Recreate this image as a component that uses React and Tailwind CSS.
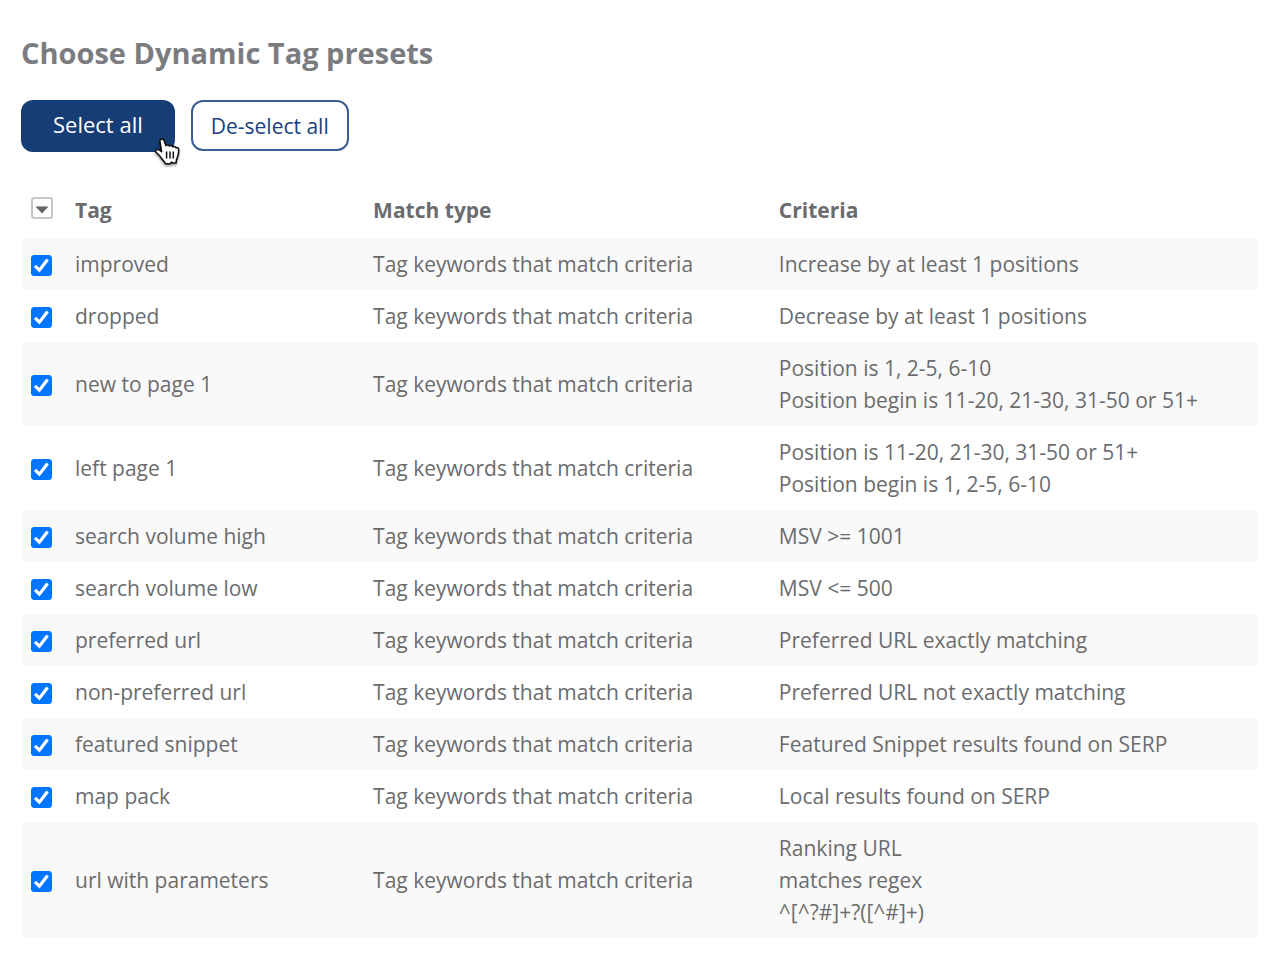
import { useState } from "react";

const MATCH_TYPE = "Tag keywords that match criteria";

const presets = [
    { tag: "improved", criteria: ["Increase by at least 1 positions"] },
    { tag: "dropped", criteria: ["Decrease by at least 1 positions"] },
    { tag: "new to page 1", criteria: ["Position is 1, 2-5, 6-10", "Position begin is 11-20, 21-30, 31-50 or 51+"] },
    { tag: "left page 1", criteria: ["Position is 11-20, 21-30, 31-50 or 51+", "Position begin is 1, 2-5, 6-10"] },
    { tag: "search volume high", criteria: ["MSV >= 1001"] },
    { tag: "search volume low", criteria: ["MSV <= 500"] },
    { tag: "preferred url", criteria: ["Preferred URL exactly matching"] },
    { tag: "non-preferred url", criteria: ["Preferred URL not exactly matching"] },
    { tag: "featured snippet", criteria: ["Featured Snippet results found on SERP"] },
    { tag: "map pack", criteria: ["Local results found on SERP"] },
    { tag: "url with parameters", criteria: ["Ranking URL", "matches regex", "^[^?#]+?([^#]+)"] },
];

const allTags = presets.map((preset) => preset.tag);

function Checkbox({ id, checked, onChange }) {
    return (
        <span className="relative block size-[21px]">
            <input
                id={id}
                type="checkbox"
                checked={checked}
                onChange={onChange}
                className="peer block size-[21px] appearance-none rounded-[3px] border border-[#b9b9b9] bg-white checked:border-[#0075ff] checked:bg-[#0075ff]"
            />
            <svg viewBox="0 0 21 21" className="pointer-events-none absolute inset-0 hidden peer-checked:block" aria-hidden="true">
                <path d="M4 10.8 L8.4 15.2 L16.6 4.6" fill="none" stroke="#fff" strokeWidth="3.2" />
            </svg>
        </span>
    );
}

function HandCursor() {
    return (
        <svg viewBox="0 0 26 30" className="pointer-events-none absolute -right-[5px] -bottom-[15px] h-[30px] w-[26px] drop-shadow-[0_2px_1px_rgba(0,0,0,0.35)]" aria-hidden="true">
            <path
                d="M7.2 2.2 C8.6 1.6 9.7 2.4 10.1 3.6 L12 8.6 C12.8 7.6 14.6 7.8 15.2 9 C16 8.2 18 8.4 18.6 9.8 C19.6 9 21.3 9.4 21.9 10.8 C23.2 10.2 24.8 11 24.7 13 C24.7 16 24.6 18 23.4 20.4 C22.5 22.2 22.2 23.4 22.1 26 H18.6 L17.6 25 L16.4 26.8 H11.4 C10.6 24.8 8.4 22.8 7.2 21 C5.8 18.8 5 17.4 2.6 15.8 C0.4 14.2 1.8 11.8 4.2 12.6 C5.6 13 6.6 13.8 7.6 14.6 L6 5.2 C5.6 3.8 5.8 2.7 7.2 2.2 Z"
                fill="#fff"
                stroke="#111"
                strokeWidth="1.6"
                strokeLinejoin="round"
            />
            <path d="M12.6 14.6 V21.4 M16 14.6 V21.4 M19.3 14.6 V21.4" fill="none" stroke="#111" strokeWidth="1.5" />
        </svg>
    );
}

export default function App() {
    const [selected, setSelected] = useState(allTags);

    const toggle = (tag) =>
        setSelected((current) => (current.includes(tag) ? current.filter((item) => item !== tag) : [...current, tag]));

    return (
        <main className="min-h-screen bg-white pt-[33px] pr-[22px] pb-5 pl-[21px] font-['Open_Sans',sans-serif] text-[21px] leading-8 text-[#6b6c6e]">
            <h1 className="text-[29px] leading-10 font-bold text-[#7b7c7f]">Choose Dynamic Tag presets</h1>

            {/* Actions */}
            <div className="mt-[27px] flex items-start gap-4">
                <button
                    type="button"
                    onClick={() => setSelected(allTags)}
                    className="relative h-[52px] rounded-xl bg-[#163d75] px-8 pb-1 text-[22px] text-white"
                >
                    Select all
                    <HandCursor />
                </button>
                <button
                    type="button"
                    onClick={() => setSelected([])}
                    className="h-[51px] rounded-xl border-2 border-[#3a5d93] bg-white px-[18px] text-[#1a3f7c]"
                >
                    De-select all
                </button>
            </div>

            {/* Presets */}
            <table className="mt-8 w-full table-fixed text-left">
                <thead>
                    <tr>
                        <th className="w-11 pt-2.5 pb-3 pl-2.5">
                            <button
                                type="button"
                                aria-label="Selection options"
                                className="mb-1 flex size-[22px] items-center justify-center rounded-[3px] border-2 border-[#c6c6c6] bg-white"
                            >
                                <svg viewBox="0 0 14 8" className="mt-1 h-2 w-3.5 shrink-0" aria-hidden="true">
                                    <path d="M0.5 0.5 H13.5 L7 7.5 Z" fill="#626366" />
                                </svg>
                            </button>
                        </th>
                        <th className="w-[24.1%] px-2.5 pt-2.5 pb-3 font-bold">Tag</th>
                        <th className="w-[32.8%] px-2.5 pt-2.5 pb-3 font-bold">Match type</th>
                        <th className="px-2.5 pt-2.5 pb-3 font-bold">Criteria</th>
                    </tr>
                </thead>
                <tbody>
                    {presets.map(({ tag, criteria }) => {
                        const id = tag.replaceAll(" ", "-");
                        return (
                            <tr key={tag} className="odd:bg-[#f9f9f9]">
                                <td className="pt-[3px] pl-2.5">
                                    <Checkbox id={id} checked={selected.includes(tag)} onChange={() => toggle(tag)} />
                                </td>
                                <td className="px-2.5 py-2.5">
                                    <label htmlFor={id}>{tag}</label>
                                </td>
                                <td className="px-2.5 py-2.5">{MATCH_TYPE}</td>
                                <td className="px-2.5 py-2.5">
                                    {criteria.map((line) => (
                                        <div key={line}>{line}</div>
                                    ))}
                                </td>
                            </tr>
                        );
                    })}
                </tbody>
            </table>
        </main>
    );
}
